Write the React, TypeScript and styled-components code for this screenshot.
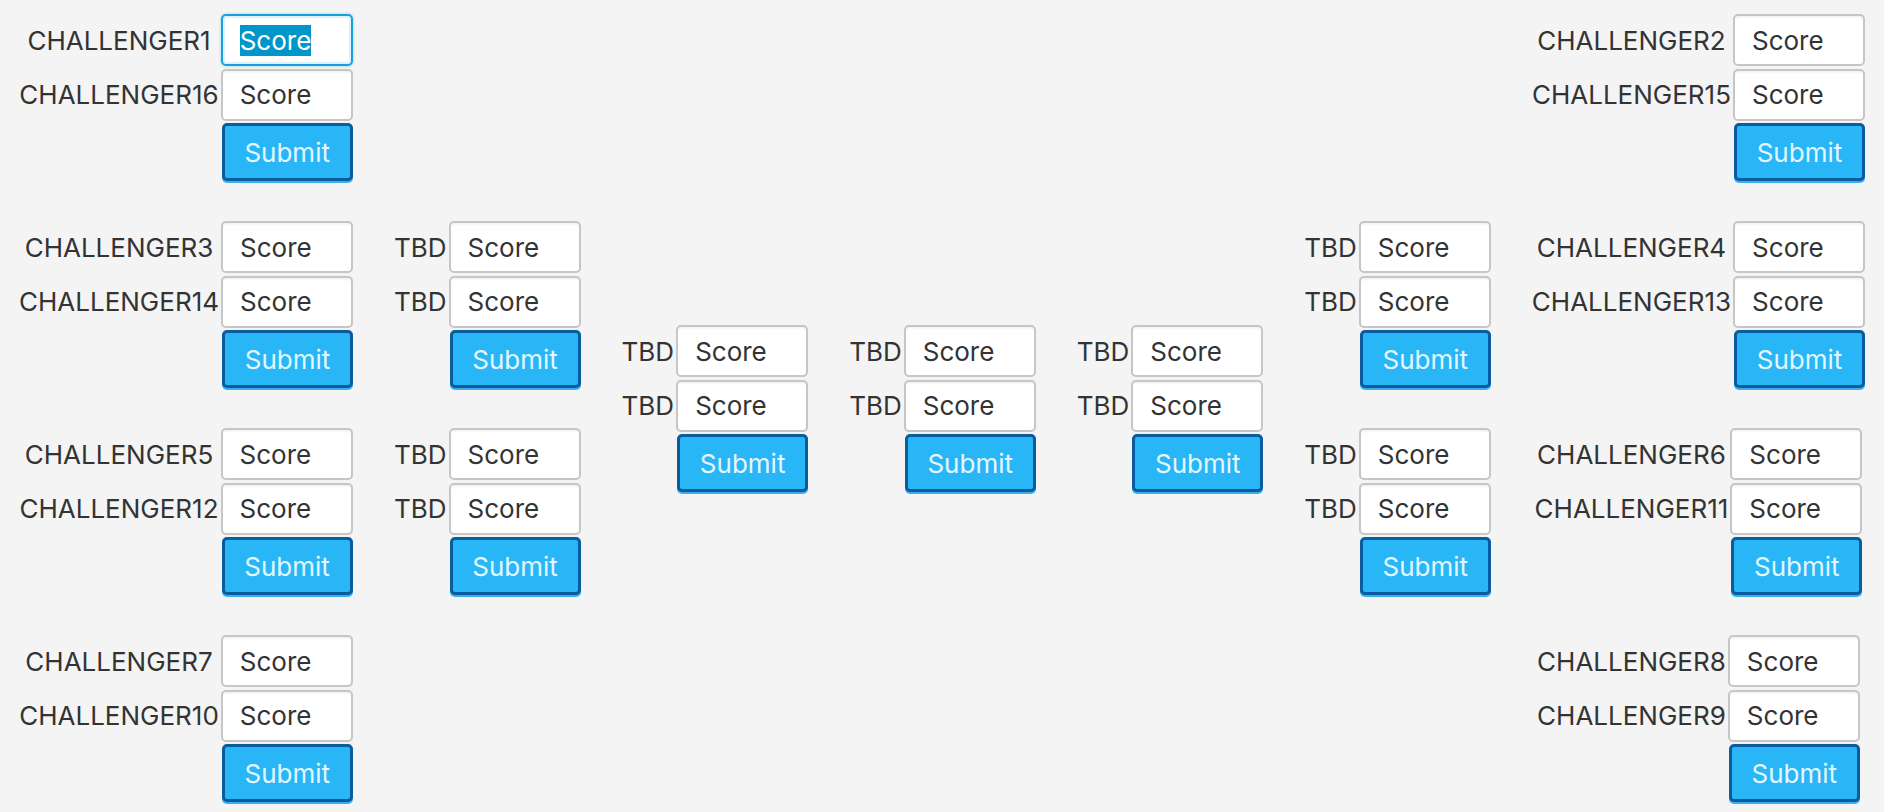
import React, { useEffect, useRef } from "react";
import styled, { createGlobalStyle } from "styled-components";

const GlobalStyle = createGlobalStyle`
  html, body {
    margin: 0;
    padding: 0;
    background: #f4f4f4;
  }
  body {
    font-family: Inter, "Noto Sans", "Liberation Sans", sans-serif;
  }
  * { box-sizing: border-box; }
`;

const Page = styled.div`
  display: flex;
  align-items: flex-start;
  gap: 41px;
  padding: 14px 0 0 19px;
  width: 1884px;
  height: 812px;
  background: #f4f4f4;
  overflow: hidden;
`;

const Column = styled.div<{ $top: number }>`
  display: flex;
  flex-direction: column;
  align-items: center;
  gap: 40px;
  padding-top: ${(p) => p.$top}px;
`;

const Match = styled.div`
  display: grid;
  grid-template-columns: auto 132px;
  grid-template-rows: 52px 52px 58px;
  column-gap: 2px;
  row-gap: 2.5px;
  align-items: center;
`;

const Name = styled.span`
  grid-column: 1;
  justify-self: center;
  font-size: 26px;
  color: #333333;
  white-space: nowrap;
`;

const ScoreField = styled.input<{ $focused?: boolean }>`
  grid-column: 2;
  width: 132px;
  height: 52px;
  padding: 0 0 0 17px;
  font-family: Inter, "Noto Sans", "Liberation Sans", sans-serif;
  font-size: 26px;
  color: #333333;
  background: #ffffff;
  border: 2px solid ${(p) => (p.$focused ? "#1a9fd9" : "#c6c6c6")};
  border-radius: 5px;
  box-shadow: ${(p) =>
    p.$focused
      ? "0 0 0 1.5px #cfe9f6, inset 0 0 0 2px #dff1fa"
      : "inset 0 3px 3px -2px rgba(0, 0, 0, 0.08)"};
  outline: none;
  &::selection {
    background: #0096c9;
    color: #ffffff;
  }
`;

const SubmitButton = styled.button`
  grid-column: 2;
  justify-self: end;
  width: 131px;
  height: 58px;
  padding: 0;
  font-family: Inter, "Noto Sans", "Liberation Sans", sans-serif;
  font-size: 26px;
  color: #e4f6ff;
  background: #29b6f6;
  border: 3px solid #0b5b9f;
  border-radius: 5px;
  box-shadow: 0 2px 0 #3aaeee;
  cursor: pointer;
`;

type MatchData = { a: string; b: string; focused?: boolean };

const FocusedField: React.FC = () => {
  const ref = useRef<HTMLInputElement>(null);
  useEffect(() => {
    const el = ref.current;
    if (el) {
      el.focus();
      el.select();
    }
  }, []);
  return <ScoreField ref={ref} $focused defaultValue="Score" />;
};

const MatchBox: React.FC<{ m: MatchData }> = ({ m }) => (
  <Match>
    <Name>{m.a}</Name>
    {m.focused ? <FocusedField /> : <ScoreField defaultValue="Score" />}
    <Name>{m.b}</Name>
    <ScoreField defaultValue="Score" />
    <SubmitButton>Submit</SubmitButton>
  </Match>
);

const tbd: MatchData = { a: "TBD", b: "TBD" };

const columns: { top: number; matches: MatchData[] }[] = [
  {
    top: 0,
    matches: [
      { a: "CHALLENGER1", b: "CHALLENGER16", focused: true },
      { a: "CHALLENGER3", b: "CHALLENGER14" },
      { a: "CHALLENGER5", b: "CHALLENGER12" },
      { a: "CHALLENGER7", b: "CHALLENGER10" },
    ],
  },
  { top: 207, matches: [tbd, tbd] },
  { top: 311, matches: [tbd] },
  { top: 311, matches: [tbd] },
  { top: 311, matches: [tbd] },
  { top: 207, matches: [tbd, tbd] },
  {
    top: 0,
    matches: [
      { a: "CHALLENGER2", b: "CHALLENGER15" },
      { a: "CHALLENGER4", b: "CHALLENGER13" },
      { a: "CHALLENGER6", b: "CHALLENGER11" },
      { a: "CHALLENGER8", b: "CHALLENGER9" },
    ],
  },
];

export default function App() {
  return (
    <>
      <GlobalStyle />
      <Page>
        {columns.map((c, i) => (
          <Column key={i} $top={c.top}>
            {c.matches.map((m, j) => (
              <MatchBox key={j} m={m} />
            ))}
          </Column>
        ))}
      </Page>
    </>
  );
}
